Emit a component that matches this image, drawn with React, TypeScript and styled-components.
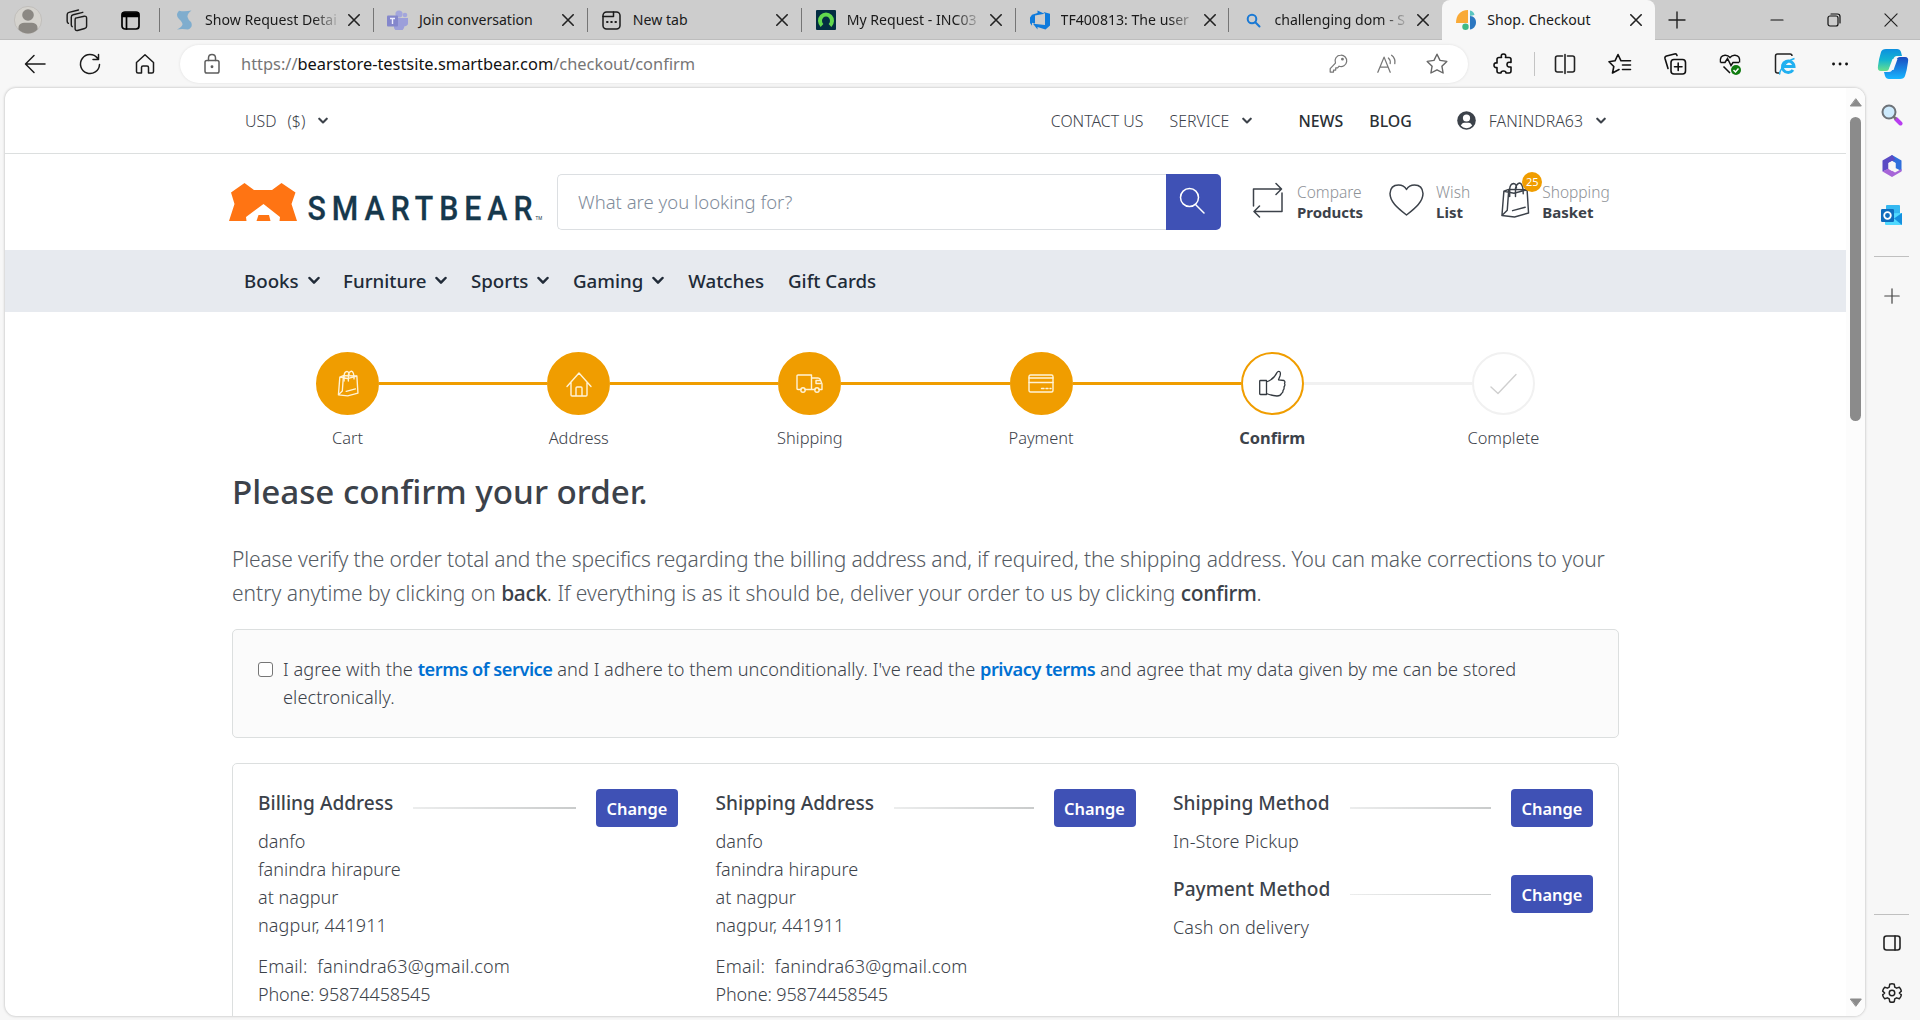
import React from "react";
import styled, { createGlobalStyle, css } from "styled-components";

const ink = "#3c424a";
const amber = "#f09d00";
const indigo = "#3f51b5";

const Global = createGlobalStyle`
  * { box-sizing: border-box; }
  body {
    margin: 0;
    overflow: hidden;
    background: #f7f7f7;
    font-family: "Noto Sans", "Open Sans", sans-serif;
    color: ${ink};
  }
`;

const Browser = styled.div`
  width: 1920px;
  height: 1020px;
  display: flex;
  flex-direction: column;
  overflow: hidden;
  background: #f7f7f7;
`;

/* ---------- tab strip ---------- */

const TabStrip = styled.div`
  height: 40px;
  display: flex;
  background: #cdcdcd;
  box-shadow: inset 0 -1px 0 #bdbdbd;
`;

const StripTools = styled.div`
  width: 159px;
  padding-left: 14px;
  display: flex;
  align-items: center;
  gap: 24px;
`;

const StripIcon = styled.div<{ $gap: number }>`
  margin-left: ${p => p.$gap}px;
  display: flex;
`;

const Tab = styled.div<{ $active?: boolean }>`
  width: 213.9px;
  display: flex;
  align-items: center;
  padding-left: 14px;
  font-size: 14.1px;
  color: #1a1a1a;
  ${p =>
    p.$active
      ? css`
          width: 213px;
          padding-left: 13px;
          background: #f7f7f7;
          border-radius: 8px 8px 0 0;
        `
      : css`
          &::before {
            content: "";
            width: 1px;
            height: 24px;
            margin-left: -14px;
            margin-right: 13px;
            background: #757575;
          }
        `}
`;

const Favicon = styled.div`
  width: 22px;
  height: 22px;
  margin-right: 10px;
  display: flex;
  align-items: center;
  justify-content: center;
`;

const TabTitle = styled.div<{ $fade?: boolean }>`
  width: 132px;
  white-space: nowrap;
  line-height: 22px;
  ${p => p.$fade && css`
    mask-image: linear-gradient(90deg, #000 82%, rgba(0, 0, 0, 0.15) 100%);
  `}
`;

const TabClose = styled.div`
  margin-left: 11px;
  display: flex;
`;

const WindowControls = styled.div`
  flex: 1;
  display: flex;
  align-items: center;
  padding-left: 13px;
`;

const NewTab = styled.div`
  width: 102px;
  display: flex;
`;

const WindowButton = styled.div`
  width: 57px;
  display: flex;
`;

/* ---------- toolbar ---------- */

const Toolbar = styled.div`
  height: 48px;
  display: flex;
  align-items: center;
  padding: 0 0 1px 23px;
`;

const NavButtons = styled.div`
  width: 157px;
  display: flex;
  gap: 31px;
`;

const AddressBar = styled.div`
  width: 1288px;
  height: 38px;
  border-radius: 19px;
  background: #fff;
  box-shadow: 0 0 3px rgba(0, 0, 0, 0.1);
  display: flex;
  align-items: center;
  padding: 0 19px 0 20px;
`;

const Url = styled.div`
  flex: 1;
  margin-left: 17px;
  font-size: 16.4px;
  line-height: 24px;
  color: #767676;
  b { font-weight: 400; color: #111; }
`;

const AddressActions = styled.div`
  display: flex;
  align-items: center;
  gap: 27px;
`;

const ToolbarActions = styled.div`
  flex: 1;
  display: flex;
  align-items: center;
  gap: 31px;
  padding-left: 24px;
`;

const ExtensionGroup = styled.div`
  display: flex;
  align-items: center;
  gap: 18px;
`;

const CopilotGroup = styled.div`
  display: flex;
  align-items: center;
  gap: 25px;
`;

const ToolbarDivider = styled.div`
  width: 1px;
  height: 24px;
  background: #c4c4c4;
`;

/* ---------- page frame ---------- */

const Main = styled.div`
  flex: 1;
  min-height: 0;
  display: flex;
  padding: 0 0 4px 5px;
`;

const Frame = styled.div`
  width: 1860px;
  display: flex;
  background: #fff;
  border-radius: 11px;
  overflow: hidden;
  box-shadow: 0 0 3px rgba(0, 0, 0, 0.28);
`;

const Page = styled.div`
  width: 1841px;
  display: flex;
  flex-direction: column;
  overflow: hidden;
`;

const ScrollTrack = styled.div`
  width: 19px;
  background: #fcfcfc;
  display: flex;
  flex-direction: column;
  align-items: center;
  padding: 10px 0 9px;
`;

const Thumb = styled.div`
  width: 11px;
  height: 304px;
  margin-top: 10px;
  margin-bottom: auto;
  border-radius: 6px;
  background: #8b8b8b;
`;

const SideBar = styled.div`
  flex: 1;
  display: flex;
  flex-direction: column;
  align-items: center;
  padding: 16px 2px 0 0;
`;

const SideItem = styled.div<{ $h: number }>`
  height: ${p => p.$h}px;
  display: flex;
`;

const SideRule = styled.div<{ $gap: number }>`
  width: 35px;
  height: 1px;
  background: #c0c0c0;
  margin-bottom: ${p => p.$gap}px;
`;

const Spacer = styled.div`flex: 1;`;

/* ---------- shop header ---------- */

const Container = styled.div`
  width: 1387px;
  margin: 0 auto;
  display: flex;
  align-items: center;
`;

const MenuBar = styled.div`
  height: 66px;
  flex: none;
  display: flex;
  border-bottom: 1px solid #dcdfdf;
`;

const MenuText = styled.span<{ $strong?: boolean; $gap?: number }>`
  font-size: 15.9px;
  line-height: 24px;
  font-weight: ${p => (p.$strong ? 500 : 300)};
  color: ${p => (p.$strong ? "#2a2f35" : ink)};
  margin-left: ${p => p.$gap ?? 0}px;
  white-space: pre;
`;

const MenuIcon = styled.span<{ $gap: number; $end?: number }>`
  margin-left: ${p => p.$gap}px;
  margin-right: ${p => p.$end ?? 0}px;
  display: flex;
`;

const HeaderBar = styled.div`
  height: 96px;
  flex: none;
  display: flex;
`;

const Logo = styled.div`
  width: 328px;
  margin-left: -3px;
  height: 56px;
  display: flex;
`;

const SearchBox = styled.div`
  width: 664px;
  height: 56px;
  display: flex;
`;

const SearchField = styled.div`
  flex: 1;
  border: 1px solid #dcdfe2;
  border-right: 0;
  border-radius: 5px 0 0 5px;
  padding-left: 20px;
  font-size: 18.5px;
  font-weight: 300;
  line-height: 53px;
  color: #7f8c9b;
`;

const SearchButton = styled.div`
  width: 55px;
  background: ${indigo};
  border-radius: 0 5px 5px 0;
  display: flex;
  align-items: center;
  justify-content: center;
  padding: 0 4px 3px 0;
`;

const ShopTool = styled.div<{ $gap: number }>`
  margin-left: ${p => p.$gap}px;
  display: flex;
  align-items: center;
  position: relative;
  white-space: nowrap;
  > svg { margin-bottom: 5px; }
`;

const ToolLabel = styled.div<{ $gap: number }>`
  margin-left: ${p => p.$gap}px;
  font-size: 15.5px;
  line-height: 20px;
  font-weight: 300;
  color: #8e9297;
  b { display: block; font-weight: 700; color: ${ink}; font-size: 15px; }
`;

const Badge = styled.div`
  position: absolute;
  left: 22px;
  top: -10px;
  width: 20px;
  height: 20px;
  border-radius: 50%;
  background: ${amber};
  color: #fff;
  font-size: 11px;
  line-height: 20px;
  text-align: center;
`;

const CategoryBar = styled.div`
  height: 62px;
  flex: none;
  display: flex;
  padding-bottom: 2px;
  background: #e7eaef;
`;

const Category = styled.div<{ $gap: number }>`
  margin-left: ${p => p.$gap}px;
  display: flex;
  align-items: center;
  gap: 9px;
  font-size: 18.7px;
  font-weight: 500;
  color: #212b38;
`;

/* ---------- checkout steps ---------- */

const Steps = styled.div`
  width: 1387px;
  margin: 40px auto 0;
  display: grid;
  grid-template-columns: repeat(6, 1fr);
  flex: none;
`;

type StepState = "done" | "active" | "todo";

const Step = styled.div`
  display: flex;
  flex-direction: column;
  align-items: center;
`;

const StepTrack = styled.div`
  width: 100%;
  display: flex;
  align-items: center;
`;

const StepLine = styled.div<{ $c: string }>`
  flex: 1;
  height: 3px;
  background: ${p => p.$c};
`;

const StepDot = styled.div<{ $state: StepState }>`
  width: 63px;
  height: 63px;
  border-radius: 50%;
  border: 2px solid ${p => (p.$state === "todo" ? "#f1f1f1" : amber)};
  background: ${p => (p.$state === "done" ? amber : "#fff")};
  color: ${p => (p.$state === "done" ? "#fff3d6" : p.$state === "active" ? "#343a40" : "#cfcfcf")};
  display: flex;
  align-items: center;
  justify-content: center;
`;

const StepLabel = styled.div<{ $strong: boolean }>`
  margin-top: 11px;
  font-size: 16.4px;
  line-height: 24px;
  font-weight: ${p => (p.$strong ? 700 : 300)};
`;

/* ---------- confirm content ---------- */

const Content = styled.div`
  width: 1387px;
  margin: 22px auto 0;
`;

const Title = styled.h1`
  margin: 0;
  font-size: 33.2px;
  line-height: 40px;
  font-weight: 500;
`;

const Lead = styled.p`
  margin: 30px 0 19px;
  font-size: 21px;
  line-height: 34px;
  font-weight: 300;
  color: #555b63;
  b { font-weight: 500; color: ${ink}; letter-spacing: -0.35px; }
`;

const LeadLine = styled.span<{ $ls: number }>`
  display: block;
  white-space: nowrap;
  letter-spacing: ${p => p.$ls}px;
`;

const TermsBox = styled.div`
  height: 109px;
  border: 1px solid #dcdfdf;
  border-radius: 5px;
  background: #fbfbfb;
  padding: 25px;
  display: flex;
`;

const Checkbox = styled.div`
  width: 15px;
  height: 15px;
  margin: 7px 10px 0 0;
  flex: none;
  border: 1px solid #767676;
  border-radius: 3px;
  background: #fff;
`;

const TermsText = styled.div`
  font-size: 18.2px;
  letter-spacing: 0.05px;
  line-height: 28px;
  font-weight: 300;
`;

const TermsLink = styled.a`
  font-weight: 600;
  letter-spacing: -0.46px;
  color: #0070d2;
`;

const AddressCard = styled.div`
  height: 300px;
  margin-top: 25px;
  border: 1px solid #dcdfdf;
  border-radius: 5px;
  padding: 25px;
  display: grid;
  grid-template-columns: repeat(3, 420px);
  column-gap: 37.5px;
`;

const Column = styled.div`
  display: flex;
  flex-direction: column;
`;

const SectionHead = styled.div<{ $gap?: number }>`
  margin-top: ${p => p.$gap ?? 0}px;
  height: 38px;
  display: flex;
  align-items: center;
`;

const SectionTitle = styled.h2`
  align-self: flex-start;
  margin: 0;
  font-size: 19.1px;
  line-height: 28px;
  font-weight: 500;
  white-space: nowrap;
`;

const SectionRule = styled.div<{ $thin?: boolean }>`
  flex: 1;
  height: ${p => (p.$thin ? 1 : 2)}px;
  margin: 0 20px;
  background: linear-gradient(90deg, #eceded, #c9cbcb);
`;

const ChangeButton = styled.button`
  width: 82px;
  height: 38px;
  padding: 1px 0 0;
  border: 0;
  border-radius: 4px;
  background: ${indigo};
  color: #fff;
  font-family: inherit;
  font-size: 16.4px;
  font-weight: 600;
`;

const Line = styled.div<{ $gap?: number; $ls?: number }>`
  margin-top: ${p => p.$gap ?? 0}px;
  font-size: 18px;
  letter-spacing: ${p => p.$ls ?? 0.03}px;
  line-height: 28px;
  font-weight: 300;
  white-space: pre;
`;

/* ---------- icons ---------- */

type IconProps = { w: number; h?: number; vb?: string; sw?: number; c?: string; children: React.ReactNode };
const Icon = ({ w, h = w, vb = "0 0 24 24", sw = 1.5, c = "currentColor", children }: IconProps) => (
  <svg width={w} height={h} viewBox={vb} fill="none" stroke={c} strokeWidth={sw} strokeLinecap="round" strokeLinejoin="round">
    {children}
  </svg>
);

const Chevron = ({ w = 10, c = ink }: { w?: number; c?: string }) => (
  <Icon w={w} h={w * 0.75} vb="0 0 12 9" sw={2.5} c={c}><path d="M1.500 2l4.500 4.600L10.500 2" /></Icon>
);
const Cross = ({ w = 12, sw = 1.6 }: { w?: number; sw?: number }) => (
  <Icon w={w} vb="0 0 12 12" sw={sw} c="#222"><path d="M.8.8l10.400 10.400M11.200.8L.8 11.200" /></Icon>
);

const BagPaths = () => (
  <>
    <path d="M4 9.500L9 7.500L28 8L29.500 32L15 36L2 34.500L4 9.500L14.500 11.500L28 8M9 8.500L7.500 29L2 34.500M7.500 29" />
    <path d="M10 15V7Q10.500 2 14 1.500Q17 2 17 6M16 15V6.500Q17 1.500 20.500 1Q24 2 24 12M13 29.500L26 26" />
  </>
);

const stepIcons: Record<string, React.ReactNode> = {
  Cart: <Icon w={22} h={27} vb="0 0 31 37" sw={1.9}><BagPaths /></Icon>,
  Address: <Icon w={26} h={26} vb="0 0 26 26" sw={1.4}><path d="M1 15.500L13 2l12 13.500M5 11.500V24q0 1 1 1h14q1 0 1-1V11.500M10 25v-8q0-1 1-1h4q1 0 1 1v8" /></Icon>,
  Shipping: <Icon w={27} h={19} vb="0 0 27 19" sw={1.4}><path d="M5 15.500H2q-1 0-1-1V2q0-1 1-1h13.500v14.500H9M15.500 4H22q2 0 2.500 2l1.500 4v5.500h-3M15.500 15.500H19M24.500 9.500h-4.500V6.500h4" /><circle cx="7" cy="16" r="2.200" /><circle cx="21" cy="16" r="2.200" /></Icon>,
  Payment: <Icon w={26} h={19} vb="0 0 26 19" sw={1.4}><rect x="1" y="1" width="24" height="17" rx="1.500" /><path d="M1 4h24M1 8.500h24" /><path d="M13.500 14.500h2.500M18 14.500h2M22 14.500h1" /></Icon>,
  Confirm: <Icon w={27} h={27} vb="0 0 27 27" sw={1.3}><path d="M1.500 10.500h6v14h-6q-.8 0-.8-.8V11.300q0-.8.8-.8zM7.500 12C13 10 16 7 18 2.500Q19 .8 20.500 1.500Q22 2.500 21 6L19.500 9.800L25 10.500Q26.500 11.500 25.500 13.500Q26.500 15 25 17Q25.500 19 24 20.500Q24.300 22.500 22.500 23.500Q21.500 26 18 26Q12 25.500 7.500 23.500" /></Icon>,
  Complete: <Icon w={27} h={22} vb="0 0 27 22" sw={1.4}><path d="M1 14l7 6.500L26 1.500" /></Icon>,
};

const Person = () => (
  <svg width="28" height="28" viewBox="0 0 28 28"><circle cx="14" cy="14" r="13.600" fill="#d5d3ce" stroke="#bcbab6" strokeWidth=".8" /><circle cx="14" cy="9" r="5.800" fill="#8b8883" /><path d="M4.500 23.500C4 17 8 16.800 14 16.800s10 .2 9.500 6.700A13.500 13.500 0 0 1 4.500 23.500z" fill="#8b8883" /></svg>
);

const favicons = {
  service: <svg width="17" height="20" viewBox="0 0 17 20"><path d="M3 .8Q9 2 15.500 .5Q11 4 11.500 7Q12 9.500 15 12Q17.500 17 12 19.500Q6 18.500 1 19.500Q6 17 6.500 14.500Q6.500 12 3 9Q-1 5 3 .8z" fill="#7fadce" /></svg>,
  teams: <svg width="21" height="20" viewBox="0 0 21 20"><circle cx="12" cy="4" r="3.600" fill="#a3a6dc" /><circle cx="18" cy="5" r="2.300" fill="#a3a6dc" /><path d="M7 8h10v6a5 5 0 0 1-10 4zM17 8h4v5a3 3 0 0 1-4 3z" fill="#9c9fda" /><rect x="0" y="5.500" width="11" height="11" rx="1" fill="#8487cc" /><path d="M3 8.500h5M5.500 8.500v5.500" stroke="#eef" strokeWidth="1.400" /></svg>,
  blank: <Icon w={19} vb="0 0 19 19" sw={1.5} c="#1b1b1b"><rect x="1" y="1" width="17" height="17" rx="3.500" /><path d="M1 5.500h10.500V1" /><path d="M5 11h.6M9.200 11h.6M13.400 11h.6" strokeWidth={2} /></Icon>,
  request: <svg width="20" height="20" viewBox="0 0 20 20"><rect width="20" height="20" rx="1" fill="#032d42" /><path d="M6 15.500A6 6.300 0 1 1 14 15.500" stroke="#62d84e" strokeWidth="4" fill="none" /></svg>,
  devops: <svg width="20" height="20" viewBox="0 0 20 20"><path d="M0 7.500L2 4.800L7.500 3V.5L14.500 3.800L5 5.600v8l-3-.8v3L0 13zM20 3.800v11.800l-4.500 4L7.500 17v2.500L3 13.700l12 1.400V3.800L13.500 2z" fill="#0f7bdc" /></svg>,
  search: <Icon w={15} vb="0 0 15 15" sw={2} c="#1a79d4"><circle cx="6" cy="6" r="4.300" /><path d="M9.300 9.300L13.500 13.500" /></Icon>,
  shop: <svg width="20" height="20" viewBox="0 0 20 20"><path d="M12 0v13H0C0 5 4 .5 12 0z" fill="#f9aa37" /><path d="M14 .5c2.500.5 4 2 4.500 4.500L14 6z" fill="#5bc5c0" /><path d="M14 6c4 0 6 3 6 6.500S17.500 19 14 19.500z" fill="#2c77c0" /><path d="M12 6V.3L14 .5v6z" fill="#f7f7f7" /><circle cx="9.500" cy="16.800" r="3.200" fill="#3fb984" /></svg>,
};

const tabs: { icon: keyof typeof favicons; title: string; fade?: boolean }[] = [
  { icon: "service", title: "Show Request Detai", fade: true },
  { icon: "teams", title: "Join conversation" },
  { icon: "blank", title: "New tab" },
  { icon: "request", title: "My Request - INC03", fade: true },
  { icon: "devops", title: "TF400813: The user", fade: true },
  { icon: "search", title: "challenging dom - S", fade: true },
];

const steps: { name: string; state: StepState }[] = [
  { name: "Cart", state: "done" },
  { name: "Address", state: "done" },
  { name: "Shipping", state: "done" },
  { name: "Payment", state: "done" },
  { name: "Confirm", state: "active" },
  { name: "Complete", state: "todo" },
];

const lineBefore = (i: number) => (i === 0 ? "transparent" : i === 5 ? "#f1f1f1" : amber);
const lineAfter = (i: number) => (i === 5 ? "transparent" : i === 4 ? "#f1f1f1" : amber);

const Head = ({ title, gap, thin }: { title: string; gap?: number; thin?: boolean }) => (
  <SectionHead $gap={gap}>
    <SectionTitle>{title}</SectionTitle>
    <SectionRule $thin={thin} />
    <ChangeButton>Change</ChangeButton>
  </SectionHead>
);

const Address = ({ title }: { title: string }) => (
  <Column>
    <Head title={title} />
    <Line>danfo</Line>
    <Line>fanindra hirapure</Line>
    <Line>at nagpur</Line>
    <Line $ls={0.12}>nagpur, 441911</Line>
    <Line $gap={13} $ls={0.18}>{"Email:  fanindra63@gmail.com"}</Line>
    <Line $ls={-0.13}>Phone: 95874458545</Line>
  </Column>
);

export default function App() {
  return (
    <Browser>
      <Global />
      <TabStrip>
        <StripTools>
          <Person />
          <Icon w={23} sw={1.5} c="#1b1b1b"><path d="M10 9.500l9-2q2.500-.4 2.500 2v8.500q0 2-2 2.400l-7.500 2q-2.500.5-2.500-2V11.500q0-1.600.5-2zM6.500 18.500q-1-.6-1-2V8.500q0-2 2-2.500L17.500 3.500M2.500 15q-1.300-.6-1.300-2.500V6q0-2 2-2.500L13 1" /></Icon>
          <StripIcon $gap={8}>
            <Icon w={19} vb="0 0 19 19" sw={1.7} c="#000"><rect x="1" y="1" width="17" height="17" rx="3" /><path d="M1.500 2h16v3.500h-16z" fill="#000" /><path d="M5.500 6v12" /></Icon>
          </StripIcon>
        </StripTools>
        {tabs.map(t => (
          <Tab key={t.title}>
            <Favicon>{favicons[t.icon]}</Favicon>
            <TabTitle $fade={t.fade}>{t.title}</TabTitle>
            <TabClose><Cross /></TabClose>
          </Tab>
        ))}
        <Tab $active>
          <Favicon>{favicons.shop}</Favicon>
          <TabTitle>Shop. Checkout</TabTitle>
          <TabClose><Cross /></TabClose>
        </Tab>
        <WindowControls>
          <NewTab><Icon w={18} vb="0 0 18 18" sw={1.4} c="#222"><path d="M9 1v16M1 9h16" /></Icon></NewTab>
          <WindowButton><Icon w={14} vb="0 0 14 14" sw={1.2} c="#111"><path d="M1 7h12" /></Icon></WindowButton>
          <WindowButton><Icon w={14} vb="0 0 14 14" sw={1.2} c="#111"><rect x="1" y="3" width="10" height="10" rx="2" /><path d="M4 1h6.500Q13 1 13 3.500V10" /></Icon></WindowButton>
          <Cross w={14} sw={1} />
        </WindowControls>
      </TabStrip>

      <Toolbar>
        <NavButtons>
          <Icon w={24} sw={1.5} c="#1b1b1b"><path d="M22 12H3M11 3.500L2.500 12l8.500 8.500" /></Icon>
          <Icon w={24} sw={1.5} c="#1b1b1b"><path d="M21.500 12.500A9.500 9.500 0 1 1 19.500 6.200M20.500 2.500v5h-5.500" /></Icon>
          <Icon w={24} sw={1.5} c="#1b1b1b"><path d="M3.500 10.500L12 2.800l8.500 7.700V19.500q0 1.500-1.500 1.500h-3.500v-5.500q0-1.500-1.500-1.500h-4q-1.500 0-1.500 1.500V21H5q-1.500 0-1.500-1.500z" /></Icon>
        </NavButtons>
        <AddressBar>
          <Icon w={24} sw={1.5} c="#5e5e5e"><rect x="5" y="8.500" width="14" height="12.500" rx="1.800" /><path d="M8.500 8.500V6Q8.500 2.500 12 2.500T15.500 6v2.500" /><circle cx="12" cy="14.800" r=".7" fill="#5e5e5e" /></Icon>
          <Url>https://<b>bearstore-testsite.smartbear.com</b>/checkout/confirm</Url>
          <AddressActions>
            <Icon w={21} sw={1.4} c="#777"><path d="M14.500 2.500a6.500 6.500 0 1 1-1.800 12.600L11 17H8.800v2.500H6.300V21.800H2.500v-4l6-6.300A6.500 6.500 0 0 1 14.500 2.500z" /><circle cx="16.500" cy="7" r=".9" fill="#777" /></Icon>
            <Icon w={22} sw={1.4} c="#777"><path d="M2 21L8.800 4.500L15.500 21M4.500 15.500h8.500M13.500 5.500q2.500 2 2 6M17 2.500q4.500 3.500 3.500 9" /></Icon>
            <Icon w={24} sw={1.4} c="#666"><path d="M12 2.200l3 6.200 6.800 1-4.900 4.800 1.200 6.800L12 17.800 5.900 21l1.200-6.800L2.200 9.400l6.800-1z" /></Icon>
          </AddressActions>
        </AddressBar>
        <ToolbarActions>
          <ExtensionGroup>
            <Icon w={24} sw={1.6} c="#111"><path d="M7 5.500h2.500q-1-3.500 2-3.500t2 3.500H17q2 0 2 2V10.500q-4-1-4 2T19 15v4q0 2-2 2h-3q0-2-2.500-2T9 21H7q-2 0-2-2V15.500q-3 .5-3-2.300t3-2.200V7.500q0-2 2-2z" /></Icon>
            <ToolbarDivider />
            <Icon w={24} sw={1.6} c="#222"><path d="M9.500 4H4.500Q2.500 4 2.500 6v12q0 2 2 2h5M14.500 4h5q2 0 2 2v12q0 2-2 2h-5M12 2.500v19" /></Icon>
          </ExtensionGroup>
          <Icon w={24} sw={1.6} c="#111"><path d="M11 17.500L4.500 21l1.300-6.500L1 9.800l6-1L10 2.500l3 6.300h9.500M14.500 13h8M14.500 17.500h8" /></Icon>
          <Icon w={24} sw={1.6} c="#111"><rect x="8" y="7.500" width="14.500" height="14.500" rx="3" /><path d="M15.200 11v7.500M11.500 14.800H19M5 16.500L2 6.500Q1.500 4.500 3.500 4L11.500 2q2-.5 2.500 1.500" /></Icon>
          <svg width="24" height="24" viewBox="0 0 24 24" fill="none" stroke="#111" strokeWidth="1.500"><path d="M12 21L5.500 14.500M2.500 10.500Q1.500 3.500 7 3.200Q10 3 12 5.500Q14 3 17 3.200Q22.500 3.500 21.500 10.500M2.500 10.500H7l2.500-4 3.500 7 2-3h6" /><circle cx="18" cy="18" r="5" fill="#107c10" stroke="none" /><path d="M15.500 18l2 2 3-3.500" stroke="#fff" /></svg>
          <svg width="24" height="24" viewBox="0 0 24 24" fill="none"><path d="M6 21H4.500Q2.500 21 2.500 19V4Q2.500 2 4.500 2H17Q19 2 19 4" stroke="#222" strokeWidth="1.500" /><path d="M9.500 14.500H21A5.800 5.800 0 1 0 20 18" stroke="#21b0f0" strokeWidth="3" /><path d="M7 22.500C5.500 20 12 9.500 21.500 6.500" stroke="#21b0f0" strokeWidth="1.500" /></svg>
          <CopilotGroup>
            <Icon w={24} sw={2.8} c="#111"><path d="M5.500 12h.1M12 12h.1M18.500 12h.1" /></Icon>
            <svg width="32" height="32" viewBox="0 0 32 32">
              <defs>
                <linearGradient id="ca" x1="0" y1="0" x2="0" y2="1"><stop offset="0" stopColor="#0c8fe0" /><stop offset=".5" stopColor="#14b5d0" /><stop offset="1" stopColor="#69e08c" /></linearGradient>
                <linearGradient id="cb" x1="0" y1="0" x2="0" y2="1"><stop offset="0" stopColor="#1b4bc0" /><stop offset="1" stopColor="#17b6ff" /></linearGradient>
              </defs>
              <path d="M9 1h11q3 0 4 3l1 4h-5q-3 0-4 4l-3 7q-1 4-4 4H4q-4 0-3-5Q2 10 4 4q1-3 5-3z" fill="url(#ca)" />
              <path d="M23 31h-11q-3 0-4-3l-1-4h5q3 0 4-4l3-7q1-4 4-4h5q4 0 3 5-1 8-3 14-1 3-5 3z" fill="url(#cb)" />
              <path d="M15.500 11h5l-4 11h-5z" fill="#f7f7f7" />
            </svg>
          </CopilotGroup>
        </ToolbarActions>
      </Toolbar>

      <Main>
        <Frame>
          <Page>
            <MenuBar>
              <Container>
                <MenuText $gap={13}>USD</MenuText>
                <MenuText $gap={11}>($)</MenuText>
                <MenuIcon $gap={13}><Chevron /></MenuIcon>
                <Spacer />
                <MenuText>CONTACT US</MenuText>
                <MenuText $gap={26}>SERVICE</MenuText>
                <MenuIcon $gap={13}><Chevron /></MenuIcon>
                <MenuText $strong $gap={46}>NEWS</MenuText>
                <MenuText $strong $gap={26}>BLOG</MenuText>
                <MenuIcon $gap={45}>
                  <svg width="19" height="19" viewBox="0 0 19 19"><circle cx="9.500" cy="9.500" r="9.300" fill={ink} /><circle cx="9.500" cy="7" r="3.600" fill="#fff" /><path d="M3.800 14.500Q5 11.800 7 11.800h5q2 0 3.200 2.700A7.500 7.500 0 0 1 3.800 14.500z" fill="#fff" /></svg>
                </MenuIcon>
                <MenuText $gap={13}>FANINDRA63</MenuText>
                <MenuIcon $gap={13} $end={13}><Chevron /></MenuIcon>
              </Container>
            </MenuBar>

            <HeaderBar>
              <Container>
                <Logo>
                  <svg width="315" height="56" viewBox="229 174 315 56">
                    <path d="M231 192.500L244.500 183L254 190H272L281.500 183L295.500 192.500L291.500 204L297 221H279.500L280 217L263.500 204L246 217L246.500 221H229L234.500 204z" fill="#ff7413" />
                    <path d="M258.500 215h10.500l1.500 6H256.500z" fill="#ff7413" />
                    <text transform="translate(307.500 220) scale(.9 1)" fontFamily="Roboto" fontWeight="500" fontSize="33.600" fill="#16384c" stroke="#16384c" strokeWidth=".3" textLength="250" lengthAdjust="spacing">SMARTBEAR</text>
                    <text x="535.500" y="219.500" fontFamily="Roboto" fontSize="4.500" fill="#16384c">TM</text>
                  </svg>
                </Logo>
                <SearchBox>
                  <SearchField>What are you looking for?</SearchField>
                  <SearchButton>
                    <Icon w={26} h={27} vb="0 0 26 27" sw={1.5} c="#fff"><circle cx="10.500" cy="10.500" r="9" /><path d="M16.500 17.500L25 26" /></Icon>
                  </SearchButton>
                </SearchBox>
                <ShopTool $gap={31}>
                  <Icon w={31} h={36} vb="0 0 31 36" sw={1.5} c={ink}><path d="M1.500 24V7H28M24 1.500L29.500 7L24 12.500M30 11V29.500H2.500M7.500 24L2 29.500L7.500 35" /></Icon>
                  <ToolLabel $gap={14}>Compare<b>Products</b></ToolLabel>
                </ShopTool>
                <ShopTool $gap={26}>
                  <Icon w={35} h={32} vb="0 0 35 32" sw={1.5} c={ink}><path d="M17.500 31C8 23.500 1 17.500 1 9.500Q1.500 1 9.500 1Q15 1 17.500 5.500Q20 1 25.500 1Q33.500 1 34 9.500C34 17.500 27 23.500 17.500 31z" /></Icon>
                  <ToolLabel $gap={12}>Wish<b>List</b></ToolLabel>
                </ShopTool>
                <ShopTool $gap={30}>
                  <Icon w={30} h={36} vb="0 0 31 37" sw={1.5} c={ink}><BagPaths /></Icon>
                  <Badge>25</Badge>
                  <ToolLabel $gap={12}>Shopping<b>Basket</b></ToolLabel>
                </ShopTool>
              </Container>
            </HeaderBar>

            <CategoryBar>
              <Container>
                <Category $gap={12}>Books <Chevron w={12} c="#212b38" /></Category>
                <Category $gap={23.500}>Furniture <Chevron w={12} c="#212b38" /></Category>
                <Category $gap={23.500}>Sports <Chevron w={12} c="#212b38" /></Category>
                <Category $gap={23.500}>Gaming <Chevron w={12} c="#212b38" /></Category>
                <Category $gap={24}>Watches</Category>
                <Category $gap={24}>Gift Cards</Category>
              </Container>
            </CategoryBar>

            <Steps>
              {steps.map((s, i) => (
                <Step key={s.name}>
                  <StepTrack>
                    <StepLine $c={lineBefore(i)} />
                    <StepDot $state={s.state}>{stepIcons[s.name]}</StepDot>
                    <StepLine $c={lineAfter(i)} />
                  </StepTrack>
                  <StepLabel $strong={s.state === "active"}>{s.name}</StepLabel>
                </Step>
              ))}
            </Steps>

            <Content>
              <Title>Please confirm your order.</Title>
              <Lead>
                <LeadLine $ls={-0.14}>Please verify the order total and the specifics regarding the billing address and, if required, the shipping address. You can make corrections to your</LeadLine>
                <LeadLine $ls={-0.02}>entry anytime by clicking on <b>back</b>. If everything is as it should be, deliver your order to us by clicking <b>confirm</b>.</LeadLine>
              </Lead>
              <TermsBox>
                <Checkbox />
                <TermsText>
                  I agree with the <TermsLink>terms of service</TermsLink> and I adhere to them unconditionally. I've read the <TermsLink>privacy terms</TermsLink> and agree that my data given by me can be stored<br />
                  electronically.
                </TermsText>
              </TermsBox>
              <AddressCard>
                <Address title="Billing Address" />
                <Address title="Shipping Address" />
                <Column>
                  <Head title="Shipping Method" />
                  <Line $ls={0.15}>In-Store Pickup</Line>
                  <Head title="Payment Method" gap={20} thin />
                  <Line $ls={0.15}>Cash on delivery</Line>
                </Column>
              </AddressCard>
            </Content>
          </Page>
          <ScrollTrack>
            <Icon w={12} h={9} vb="0 0 12 9" sw={1} c="#8b8b8b"><path d="M6 1L11.300 8H.7z" fill="#8b8b8b" /></Icon>
            <Thumb />
            <Icon w={12} h={9} vb="0 0 12 9" sw={1} c="#8b8b8b"><path d="M6 8L11.300 1H.7z" fill="#8b8b8b" /></Icon>
          </ScrollTrack>
        </Frame>
        <SideBar>
          <SideItem $h={50}>
            <svg width="22" height="22" viewBox="0 0 22 22"><path d="M15 15l4.500 4.500" stroke="#b83df0" strokeWidth="4" strokeLinecap="round" /><path d="M12 12l3 3" stroke="#777" strokeWidth="2.500" /><circle cx="8" cy="8" r="6.500" fill="#cdeafc" stroke="#6d7278" strokeWidth="2" /></svg>
          </SideItem>
          <SideItem $h={50}>
            <svg width="22" height="24" viewBox="0 0 22 24"><path d="M11 1L20.500 6.500V17L14.500 14V9L7.500 5z" fill="#2f6fdc" /><path d="M11 1L1.500 6.500V17.500L7.500 15V9L14.500 5.500z" fill="#5b4bc4" /><path d="M1.500 17.500L7.500 14.500L14 18.500L20.500 15V17.500L11 23z" fill="#a765d8" /><path d="M7.500 15V9L11 7l3.500 2v5L11 17z" fill="#f7f7f7" /></svg>
          </SideItem>
          <SideItem $h={52}>
            <svg width="22" height="22" viewBox="0 0 22 22"><rect x="5" y="1" width="14" height="13" rx="1" fill="#35b8f1" /><path d="M4 9.500L21 9v11q0 1-1 1H5q-1 0-1-1z" fill="#50d9ff" /><path d="M21 9v12L13 14.500z" fill="#1490df" /><rect x="0" y="5" width="13" height="13" rx="1.200" fill="#0f6cbd" /><circle cx="6.500" cy="11.500" r="3.300" fill="none" stroke="#fff" strokeWidth="1.800" /></svg>
          </SideItem>
          <SideRule $gap={31} />
          <Icon w={16} vb="0 0 16 16" sw={1.2} c="#444"><path d="M8 .8v14.400M.8 8h14.400" /></Icon>
          <Spacer />
          <SideRule $gap={19} />
          <SideItem $h={48}>
            <Icon w={18} vb="0 0 18 18" sw={1.6} c="#222"><rect x="1" y="2" width="16" height="14" rx="2.500" /><path d="M12 2v14" /></Icon>
          </SideItem>
          <SideItem $h={34}>
            <Icon w={22} sw={1.6} c="#222"><circle cx="12" cy="12" r="3" /><path d="M9.500 2.500Q12 1.500 14.500 2.500l.5 3 2 1.200 3-1q1.800 1.800 2.200 4.300l-2.200 2 0 0 2.200 2q-.4 2.500-2.200 4.300l-3-1-2 1.200-.5 3Q12 22.500 9.500 21.500l-.5-3-2-1.200-3 1Q2.200 16.500 1.800 14l2.200-2-2.200-2Q2.200 7.500 4 5.700l3 1 2-1.200z" /></Icon>
          </SideItem>
        </SideBar>
      </Main>
    </Browser>
  );
}
